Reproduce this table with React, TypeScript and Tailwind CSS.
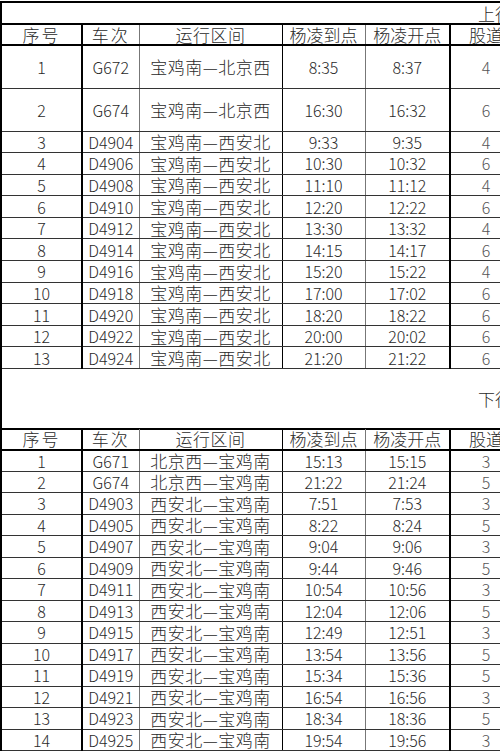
import React from "react";

const up: [string, string, string, string, string, string][] = [
  ["1", "G672", "宝鸡南—北京西", "8:35", "8:37", "4"],
  ["2", "G674", "宝鸡南—北京西", "16:30", "16:32", "6"],
  ["3", "D4904", "宝鸡南—西安北", "9:33", "9:35", "4"],
  ["4", "D4906", "宝鸡南—西安北", "10:30", "10:32", "6"],
  ["5", "D4908", "宝鸡南—西安北", "11:10", "11:12", "4"],
  ["6", "D4910", "宝鸡南—西安北", "12:20", "12:22", "6"],
  ["7", "D4912", "宝鸡南—西安北", "13:30", "13:32", "4"],
  ["8", "D4914", "宝鸡南—西安北", "14:15", "14:17", "6"],
  ["9", "D4916", "宝鸡南—西安北", "15:20", "15:22", "4"],
  ["10", "D4918", "宝鸡南—西安北", "17:00", "17:02", "6"],
  ["11", "D4920", "宝鸡南—西安北", "18:20", "18:22", "6"],
  ["12", "D4922", "宝鸡南—西安北", "20:00", "20:02", "6"],
  ["13", "D4924", "宝鸡南—西安北", "21:20", "21:22", "6"],
];

const down: [string, string, string, string, string, string][] = [
  ["1", "G671", "北京西—宝鸡南", "15:13", "15:15", "3"],
  ["2", "G674", "北京西—宝鸡南", "21:22", "21:24", "5"],
  ["3", "D4903", "西安北—宝鸡南", "7:51", "7:53", "3"],
  ["4", "D4905", "西安北—宝鸡南", "8:22", "8:24", "5"],
  ["5", "D4907", "西安北—宝鸡南", "9:04", "9:06", "3"],
  ["6", "D4909", "西安北—宝鸡南", "9:44", "9:46", "5"],
  ["7", "D4911", "西安北—宝鸡南", "10:54", "10:56", "3"],
  ["8", "D4913", "西安北—宝鸡南", "12:04", "12:06", "5"],
  ["9", "D4915", "西安北—宝鸡南", "12:49", "12:51", "3"],
  ["10", "D4917", "西安北—宝鸡南", "13:54", "13:56", "5"],
  ["11", "D4919", "西安北—宝鸡南", "15:34", "15:36", "5"],
  ["12", "D4921", "西安北—宝鸡南", "16:54", "16:56", "3"],
  ["13", "D4923", "西安北—宝鸡南", "18:34", "18:36", "5"],
  ["14", "D4925", "西安北—宝鸡南", "19:54", "19:56", "3"],
];

const headers = ["序号", "车次", "运行区间", "杨凌到点", "杨凌开点", "股道"];

const cellCls = [
  "border-l-2 border-l-black border-r-2 border-r-black",
  "border-r border-r-[#777]",
  "border-r border-r-black",
  "border-r border-r-[#777]",
  "border-r-2 border-r-black",
  "",
];

function Row({ r, h }: { r: string[]; h: string }) {
  return (
    <tr className={h}>
      {r.map((c, i) => (
        <td
          key={i}
          className={`border-b border-b-[#333] p-0 text-center whitespace-nowrap ${cellCls[i]} ${
            i === 5 ? "text-[#555]" : ""
          } ${i === 2 ? "text-[17px] tracking-[0.5px]" : ""}`}
        >
          {c}
        </td>
      ))}
    </tr>
  );
}

function Header() {
  return (
    <tr className="h-[21px]">
      {headers.map((c, i) => (
        <td
          key={i}
          className={`border-b-2 border-b-black p-0 text-center whitespace-nowrap text-[17px] ${cellCls[i]} ${
            i === 0 || i === 1 ? "tracking-[2px]" : i === 2 ? "tracking-[0.5px]" : ""
          }`}
        >
          {c}
        </td>
      ))}
    </tr>
  );
}

export default function App() {
  return (
    <div className="w-[500px] h-[752px] overflow-hidden bg-white pt-[1px]">
      <table
        className="table-fixed border-collapse w-[520px] text-[16px] leading-none text-[#2a2a2a]"
        style={{ fontFamily: '"Noto Sans CJK SC", "Noto Sans", sans-serif', fontWeight: 300 }}
      >
        <colgroup>
          <col className="w-[81px]" />
          <col className="w-[57px]" />
          <col className="w-[143px]" />
          <col className="w-[83px]" />
          <col className="w-[85px]" />
          <col className="w-[71px]" />
        </colgroup>
        <tbody>
          <tr className="h-[22px]">
            <td
              colSpan={6}
              className="border-t-2 border-t-black border-l-2 border-l-black border-b-2 border-b-black p-0 whitespace-nowrap text-[17px]"
            >
              <div className="pl-[476px]">上行</div>
            </td>
          </tr>
          <Header />
          {up.map((r, i) => (
            <Row key={r[1] + i} r={r} h={i < 2 ? "h-[43px]" : "h-[21.6px]"} />
          ))}
          <tr className="h-[60px]">
            <td colSpan={6} className="border-l-2 border-l-black p-0 whitespace-nowrap text-[17px]">
              <div className="pl-[476px]">下行</div>
            </td>
          </tr>
          <tr className="h-0 border-t-2 border-t-black"></tr>
          <Header />
          {down.map((r, i) => (
            <Row key={r[1] + i} r={r} h="h-[21.5px]" />
          ))}
        </tbody>
      </table>
    </div>
  );
}
